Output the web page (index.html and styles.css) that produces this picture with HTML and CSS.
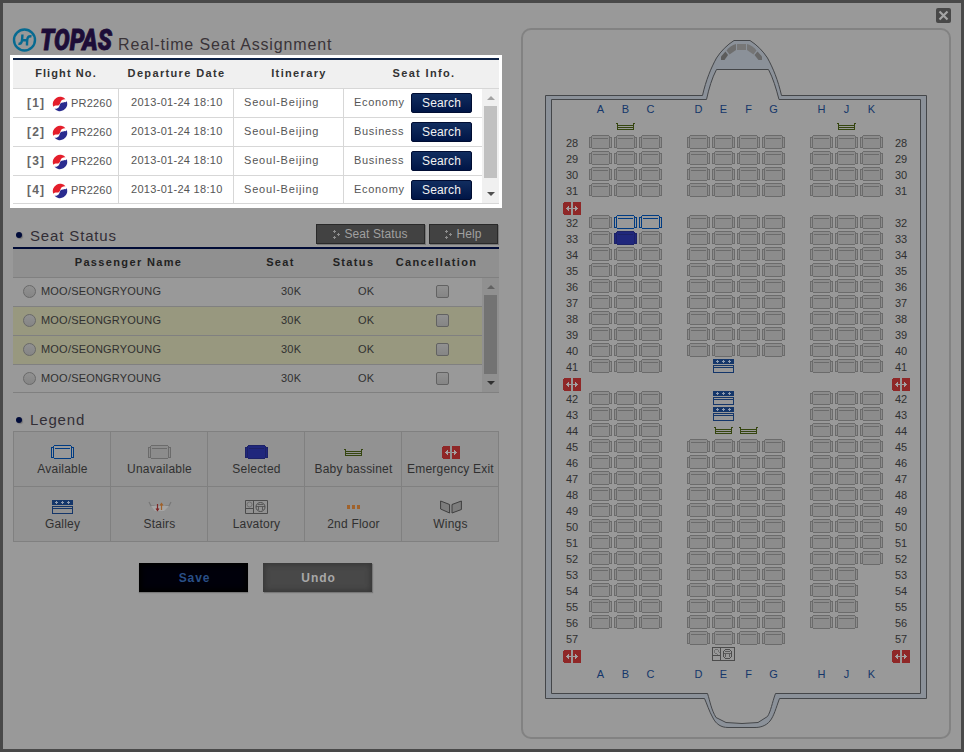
FILE: index.html
```html
<!DOCTYPE html>
<html lang="en">
<head>
<meta charset="utf-8">
<title>Real-time Seat Assignment</title>
<link rel="stylesheet" href="styles.css">
</head>
<body>
<svg class="defs" width="0" height="0" aria-hidden="true">
  <symbol id="seat" viewBox="0 0 23 14">
    <path class="arm" d="M2.5 2.5H.5V12.5H2.5ZM20.5 2.5H22.5V12.5H20.5Z"/>
    <path class="body" d="M3.5 .5H19.5L20.5 1.5V12.5L19.5 13.5H3.5L2.5 12.5V1.5Z"/>
    <path class="seam" d="M4 3.5H19" fill="none"/>
  </symbol>
  <symbol id="bassinet" viewBox="0 0 19 7">
    <path d="M0 .5H2M17 .5H19M1.5 0V7M17.5 0V7M1 2.5H18M1 4.5H18M1 6.5H18" stroke="#35450f" fill="none"/>
  </symbol>
  <symbol id="exit" viewBox="0 0 18 13">
    <path d="M1 0H8V13H1L0 12V1ZM10 0H17L18 1V12L17 13H10Z" fill="#8f2727"/>
    <path d="M3 6H8V7H3ZM4 5H5V8H4ZM5 4H6V9H5ZM10 6H15V7H10ZM13 5H14V8H13ZM12 4H13V9H12Z" fill="#a5a0a0"/>
  </symbol>
  <symbol id="galley" viewBox="0 0 21 14">
    <path d="M0 0H21V5H0Z" fill="#14366a"/>
    <path d="M.5 6.5H20.5V13.5H.5ZM1 8.5H20" fill="none" stroke="#14366a"/>
    <path d="M3 2.500H6M4.500 1V4M9 2.500H12M10.500 1V4M15 2.500H18M16.500 1V4" stroke="#8f9cb0" fill="none"/>
  </symbol>
  <symbol id="lavatory" viewBox="0 0 23 14">
    <path d="M.5 .5H22.500V13.500H.5ZM8.500 1V13M1 8.500H8" fill="none" stroke="#4c4c4c"/>
    <circle cx="4.500" cy="4.500" r="2.500" fill="none" stroke="#666" stroke-width=".8"/>
    <circle cx="15.500" cy="7" r="4.500" fill="none" stroke="#4c4c4c"/>
    <path d="M11 6.500H20M13 4.500H18M13.500 10V6.500M17.500 10V6.500" stroke="#4c4c4c" stroke-width=".8" fill="none"/>
  </symbol>
  <symbol id="airline" viewBox="0 0 16 16">
    <path d="M1.300 10.800A7.300 7.300 0 0 1 13.500 3.200C11 3 9.200 4 8.600 6C8 8.500 7 9.600 5 9.600C3 9.600 2 10 1.300 10.800Z" fill="#e41e2b"/>
    <path d="M14.700 5.200A7.300 7.300 0 0 1 2.500 12.800C5 13 6.800 12 7.400 10C8 7.500 9 6.400 11 6.400C13 6.400 14 6 14.700 5.200Z" fill="#2a2c8f"/>
  </symbol>
</svg>

<div class="window">
  <section class="left">
    <header class="title">
      <svg class="logo" width="102" height="28" viewBox="0 0 102 28">
        <circle cx="11.500" cy="15" r="10.500" fill="none" stroke="#066a91" stroke-width="2.400"/>
        <path d="M5.500 18.500C8.500 19.500 9.200 17 9.400 9.500M14 20.500C14 13 14.500 10.500 18.500 11.500M9 15.200H14.500" fill="none" stroke="#066a91" stroke-width="2.400"/>
        <text class="brand" x="27" y="25" textLength="72" lengthAdjust="spacingAndGlyphs">TOPAS</text>
      </svg>
      <h1>Real-time Seat Assignment</h1>
    </header>

    <div class="flights">
      <div class="thead flight-head"><span>Flight No.</span><span>Departure Date</span><span>Itinerary</span><span>Seat Info.</span></div>
      <div class="tbody">
        <div class="rows">
          <div class="flight"><div class="no"><b>[1]</b><svg width="16" height="16"><use href="#airline"/></svg><span>PR2260</span></div><div class="date">2013-01-24 18:10</div><div class="route">Seoul-Beijing</div><div class="info"><span>Economy</span><button>Search</button></div></div>
          <div class="flight"><div class="no"><b>[2]</b><svg width="16" height="16"><use href="#airline"/></svg><span>PR2260</span></div><div class="date">2013-01-24 18:10</div><div class="route">Seoul-Beijing</div><div class="info"><span>Business</span><button>Search</button></div></div>
          <div class="flight"><div class="no"><b>[3]</b><svg width="16" height="16"><use href="#airline"/></svg><span>PR2260</span></div><div class="date">2013-01-24 18:10</div><div class="route">Seoul-Beijing</div><div class="info"><span>Business</span><button>Search</button></div></div>
          <div class="flight"><div class="no"><b>[4]</b><svg width="16" height="16"><use href="#airline"/></svg><span>PR2260</span></div><div class="date">2013-01-24 18:10</div><div class="route">Seoul-Beijing</div><div class="info"><span>Economy</span><button>Search</button></div></div>
        </div>
        <div class="scroll"><i class="up"></i><i class="thumb"></i><i class="down"></i></div>
      </div>
    </div>

    <div class="heading status-heading">
      <h2>Seat Status</h2>
      <a class="tool wide"><svg width="7" height="9" viewBox="0 0 7 9"><path d="M0 1.500H3M1.500 0V3M4 4.500H7M5.500 3V6M0 7.500H3M1.500 6V9"/></svg>Seat Status</a>
      <a class="tool"><svg width="7" height="9" viewBox="0 0 7 9"><path d="M0 1.500H3M1.500 0V3M4 4.500H7M5.500 3V6M0 7.500H3M1.500 6V9"/></svg>Help</a>
    </div>
    <div class="passengers">
      <div class="thead passenger-head"><span>Passenger Name</span><span>Seat</span><span>Status</span><span>Cancellation</span></div>
      <div class="tbody">
        <div class="rows">
          <div class="passenger"><i class="radio"></i><span>MOO/SEONGRYOUNG</span><span>30K</span><span>OK</span><i class="check"></i></div>
          <div class="passenger marked"><i class="radio"></i><span>MOO/SEONGRYOUNG</span><span>30K</span><span>OK</span><i class="check"></i></div>
          <div class="passenger marked"><i class="radio"></i><span>MOO/SEONGRYOUNG</span><span>30K</span><span>OK</span><i class="check"></i></div>
          <div class="passenger"><i class="radio"></i><span>MOO/SEONGRYOUNG</span><span>30K</span><span>OK</span><i class="check"></i></div>
        </div>
        <div class="scroll"><i class="up"></i><i class="thumb"></i><i class="down"></i></div>
      </div>
    </div>

    <div class="heading legend-heading"><h2>Legend</h2></div>
    <div class="legend">
      <div><svg class="icon available" width="23" height="14"><use href="#seat"/></svg><span>Available</span></div>
      <div><svg class="icon" width="23" height="14"><use href="#seat"/></svg><span>Unavailable</span></div>
      <div><svg class="icon selected" width="23" height="14"><use href="#seat"/></svg><span>Selected</span></div>
      <div><svg class="icon" width="19" height="7"><use href="#bassinet"/></svg><span>Baby bassinet</span></div>
      <div><svg class="icon" width="18" height="13"><use href="#exit"/></svg><span>Emergency Exit</span></div>
      <div><svg class="icon" width="21" height="14"><use href="#galley"/></svg><span>Galley</span></div>
      <div><svg width="24" height="12" viewBox="0 0 24 12"><path d="M1 1L3 5H6L8 10M23 1L21 5H18L15 10" fill="none" stroke="#777" stroke-width="1.200"/><path d="M3 5H21L16 10H7Z" fill="#a5a5a5"/><path d="M9.500 3V9M8 7.500L9.500 9.500L11 7.500" stroke="#7d2626" stroke-width="1.200" fill="none"/><path d="M13.500 9V3M12 4.500L13.500 2.500L15 4.500" stroke="#a0622b" stroke-width="1.200" fill="none"/></svg><span>Stairs</span></div>
      <div><svg width="23" height="14"><use href="#lavatory"/></svg><span>Lavatory</span></div>
      <div><svg class="icon" width="13" height="4" viewBox="0 0 13 4"><path d="M0 0H3V4H0ZM5 0H8V4H5ZM10 0H13V4H10Z" fill="#a0622b"/></svg><span>2nd Floor</span></div>
      <div><svg width="22" height="14" viewBox="0 0 22 14"><path d="M.6 1L9.600 4.500V13L.6 9ZM21.400 1L12 4.500V13L21.400 9.500Z" fill="#7d7d7d" stroke="#3e3e3e"/></svg><span>Wings</span></div>
    </div>

    <div class="actions"><button class="save">Save</button><button class="undo">Undo</button></div>
  </section>

  <section class="right">
    <button class="close" aria-label="Close"><svg width="15" height="15" viewBox="0 0 15 15"><path d="M3.500 3.500L11.500 11.500M11.500 3.500L3.500 11.500" stroke="#a5a5a5" stroke-width="2.200"/></svg></button>
    <div class="cabin">
      <svg class="hull" width="426" height="707" viewBox="523 30 426 707">
        <path fill-rule="evenodd" fill="#8b9199" stroke="#444649" d="M545.500 95.500H702.500C706 80 711 68 716.500 58C721 51 727 45 734 40.500H750C757 45 763 51 767.500 58C773 68 778 80 781.500 95.500H926.500V698.500H779.500C776 708 774 716 770 721C766 726 760 727.500 755 727.500H728C721 727.500 716 724 713 718C709 711 707 704 704.500 698.500H545.500Z
        M551.500 99.500H706.500C709 88 712 78 716.500 69.500H768.500C773 78 776 88 779 99.500H920.500V693.500H775.500C772 703 771 711 767.500 716.500L758 722.500Q742 724.500 726 722.500L716 717.500C711 709 710 701 707.500 693.500H551.500Z"/>
        <path d="M721 56.500L725.500 51.500L728 55L724.500 60H721Z" fill="#5c5c5c"/>
        <path d="M726.500 50.500C729 47.500 732 45 736 44V50L729.500 54.500Z" fill="#6e6e6e"/>
        <path d="M737 44H746V50H737Z" fill="#777"/>
        <path d="M747 44C751 45 754 47.500 756.500 50.500L753.500 54.500L747 50Z" fill="#757575"/>
        <path d="M757.500 51.500L762 56.500V60H758.500L754.500 55Z" fill="#686868"/>
      </svg>
      <div class="seatmap" id="seatmap"></div>
    </div>
  </section>
</div>
<script src="seatmap.js"></script>
</body>
</html>
```
FILE: styles.css
```css
* { box-sizing: border-box; }
body {
  margin: 0;
  font-family: "Liberation Sans", Arial, sans-serif;
  font-size: 11px;
  color: #303030;
}
h1, h2 { margin: 0; font-weight: normal; }
button { font-family: inherit; padding: 0; }
svg { display: block; flex: none; }
i { display: block; }
.defs { position: absolute; }

.window {
  width: 964px;
  height: 752px;
  border: 3px solid #494949;
  background: #999;
  display: flex;
}
.left { width: 518px; padding: 22px 0 0 7px; }

.title { height: 30px; display: flex; padding-left: 3px; }
.logo { overflow: visible; }
.brand {
  font-family: Roboto, sans-serif;
  font-size: 29px;
  font-weight: 900;
  font-style: italic;
  fill: #1d0d38;
  stroke: #1d0d38;
  stroke-width: .8px;
}
h1 {
  margin: 10px 0 0 3px;
  font-size: 16px;
  line-height: 19px;
  letter-spacing: .85px;
  color: #3a3438;
  white-space: nowrap;
}

.flights {
  width: 492px;
  height: 153px;
  padding: 3px;
  background: #fff;
  color: #555;
}
.thead {
  display: grid;
  height: 31px;
  border-top: 2px solid #0c2144;
  border-bottom: 1px solid #d7d7d7;
  background: #f0f0f0;
  color: #333;
  font-weight: bold;
  letter-spacing: 1.35px;
  line-height: 27px;
  text-align: center;
  white-space: nowrap;
}
.flight-head { grid-template-columns: 106px 115px 130px 120px; }
.flight-head span:first-child { letter-spacing: 1.1px; }
.tbody { display: flex; }
.rows { width: 469px; }
.flight {
  display: grid;
  grid-template-columns: 106px 115px 110px 138px;
  height: 29px;
  border-bottom: 1px solid #d7d7d7;
  line-height: 27px;
  white-space: nowrap;
}
.flight:last-child, .passenger:last-child { height: 28px; }
.flight > div { border-right: 1px solid #d7d7d7; }
.no { display: flex; align-items: center; height: 28px; padding-left: 14px; letter-spacing: .2px; }
.no b { width: 24px; font-size: 12px; color: #666; letter-spacing: 1.2px; }
.no svg { margin: 1px 3px 0 1px; }
.no > span { margin-top: 1px; }
.date { height: 28px; padding-left: 12px; letter-spacing: .3px; }
.route { height: 28px; padding-left: 10px; letter-spacing: .8px; }
.flight .info { display: flex; align-items: flex-start; height: 27px; padding-left: 10px; border-right: 0; letter-spacing: .7px; }
.info span { width: 57px; }
.info button {
  width: 61px;
  height: 20px;
  margin-top: 4px;
  border: 1px solid #000d33;
  border-radius: 2px;
  background: linear-gradient(#112d5f, #001546);
  color: #f2f2f2;
  font-size: 12px;
  line-height: 18px;
  letter-spacing: .15px;
}
.scroll {
  width: 17px;
  height: 115px;
  padding: 7px 2px 7px;
  background: #f0f0f0;
  border-bottom: 1px solid #d7d7d7;
  display: flex;
  flex-direction: column;
  align-items: center;
}
.up { border: 4px solid transparent; border-top: 0; border-bottom-color: #a3a3a3; }
.thumb { width: 13px; height: 72px; margin: 6px 0 14px; background: #c1c1c1; }
.down { border: 4px solid transparent; border-bottom: 0; border-top-color: #505050; }

.heading { display: flex; align-items: center; padding-left: 6px; }
.heading::before {
  content: "";
  width: 6px;
  height: 6px;
  margin-right: 8px;
  border-radius: 50%;
  background: #000b3a;
  box-shadow: 1px 1px 1px #777;
}
h2 { font-size: 15px; line-height: 20px; letter-spacing: .85px; color: #322e36; }
.status-heading { width: 488px; height: 22px; margin-top: 16px; padding-bottom: 2px; }
.status-heading::before { margin-top: 2px; }
.status-heading h2 { margin: 3px auto 0 0; }
.tool {
  width: 69px;
  height: 20px;
  display: flex;
  align-items: center;
  justify-content: center;
  gap: 4px;
  margin-left: 4px;
  border: 1px solid #292929;
  background: #424242;
  box-shadow: 1px 1px 0 #777;
  color: #a0a0a0;
  font-size: 12px;
  letter-spacing: .1px;
}
.tool.wide { width: 109px; }
.tool path { fill: none; stroke: #a0a0a0; shape-rendering: crispEdges; stroke-opacity: .8; }

.passengers { width: 486px; margin: 1px 0 0 3px; }
.passengers .thead { border-top-color: #000b36; border-bottom-color: #808080; background: #909090; color: #222; }
.passenger-head { grid-template-columns: 231px 73px 73px 93px; }
.passenger {
  display: grid;
  grid-template-columns: 28px 237px 76px 82px 1fr;
  align-items: start;
  height: 29px;
  border-bottom: 1px solid #808080;
  letter-spacing: .2px;
  line-height: 26px;
}
.passenger.marked { background: #98987f; }
.passenger span:nth-of-type(2) { padding-left: 3px; }
.passenger span:nth-of-type(3) { padding-left: 4px; }
.radio, .check {
  width: 13px;
  height: 13px;
  margin-top: 7px;
  border: 1px solid #696969;
  background: linear-gradient(#919191, #858585);
}
.radio { margin-left: 10px; border-radius: 50%; }
.check { border-radius: 2px; border-color: #626262; }
.passengers .scroll { background: #909090; border-color: #808080; }
.passengers .thumb { height: 79px; background: #737373; margin-bottom: 7px; }
.passengers .up { border-bottom-color: #626262; }
.passengers .down { border-top-color: #303030; }

.legend-heading { height: 20px; margin-top: 17px; }
.legend {
  width: 486px;
  margin: 1px 0 0 3px;
  display: grid;
  grid-template-columns: repeat(5, 97px);
  grid-auto-rows: 55px;
  border: solid #808080;
  border-width: 1px 0 0 1px;
  background: #929292;
}
.legend div {
  display: grid;
  grid-template-rows: 16px 15px;
  row-gap: 1px;
  place-items: center;
  align-content: start;
  padding: 12px 0 0 1px;
  border: solid #808080;
  border-width: 0 1px 1px 0;
  font-size: 12px;
  letter-spacing: .2px;
  white-space: nowrap;
}
.icon { shape-rendering: crispEdges; }
#seat path { stroke: var(--line, #6b6b6b); fill: var(--body, #8c8c8c); }
.available use { --line: #003b82; --body: #999; }
.selected use { --line: #1d2266; --body: #20277c; }

.actions { display: flex; gap: 15px; margin: 21px 0 0 129px; }
.actions button {
  width: 109px;
  height: 29px;
  padding-left: 2px;
  border: 0;
  font-size: 12px;
  font-weight: bold;
  line-height: 31px;
  letter-spacing: .9px;
}
.save { background: #00000a; box-shadow: inset 0 0 4px 3px #000, 0 1px 1px #777; color: #294f86; }
.undo { background: #484848; box-shadow: inset 0 0 5px 2px #383838, 1px 1px 1px #777; color: #a8a8a8; }

.right { display: flex; flex-direction: column; width: 430px; }
.close {
  width: 15px;
  height: 15px;
  margin: 5px 0 5px auto;
  border: 0;
  border-radius: 2px;
  background: #484848;
}
.cabin {
  position: relative;
  width: 430px;
  height: 711px;
  border: 2px solid #828282;
  border-radius: 10px;
}
.hull { position: absolute; inset: 0; }
.seatmap { position: relative; margin: 71px 0 0 40px; }
.row {
  display: grid;
  grid-template-columns: 18px 8px repeat(3, 25px) 23px repeat(4, 25px) 23px repeat(3, 25px) 7px 18px;
  height: 16px;
}
.letters { line-height: 16px; color: #14366a; }
.letters.top { height: 18px; }
.letters.bottom { margin-top: 3px; }
.letters span { width: 23px; text-align: center; }
.number { line-height: 17px; text-align: center; }
.row .bassinet { margin: 4px 0 0 2px; }
.row .exit { margin-top: 3px; }
.row .galley { margin-left: 1px; }
```
FILE: seatmap.js
```js
const COLUMN = { A: 3, B: 4, C: 5, D: 7, E: 8, F: 9, G: 10, H: 12, J: 13, K: 14 };
const LEFT = 1, RIGHT = 16;
const SIZE = { seat: [23, 14], bassinet: [19, 7], exit: [18, 13], galley: [21, 14], lavatory: [23, 14] };
const map = document.getElementById("seatmap");

function addRow(content, name = "") {
  map.insertAdjacentHTML("beforeend", `<div class="row ${name}">${content}</div>`);
}
function icon(type, col, state = "") {
  const [w, h] = SIZE[type];
  return `<svg class="icon ${type} ${state}" width="${w}" height="${h}" style="grid-area:1/${col}"><use href="#${type}"/></svg>`;
}
function text(value, col, name = "") {
  return `<span class="${name}" style="grid-area:1/${col}">${value}</span>`;
}
const letters = Object.entries(COLUMN).map(([l, c]) => text(l, c)).join("");

const EXTRAS = { 41: { E: "galley" }, 42: { E: "galley" }, 43: { E: "galley" }, 44: { E: "bassinet", F: "bassinet" } };
const STATES = { "32B": "available", "32C": "available", "33B": "selected" };

function hasSeat(row, letter) {
  if ("ABC".includes(letter)) return row <= 56;
  if ("DEFG".includes(letter)) return row <= 40 || row >= 45;
  return row <= (letter === "K" ? 52 : 56);
}

addRow(letters, "letters top");
addRow(icon("bassinet", COLUMN.B) + icon("bassinet", COLUMN.J));
for (let row = 28; row <= 57; row++) {
  let cells = text(row, LEFT, "number") + text(row, RIGHT, "number");
  for (const [letter, col] of Object.entries(COLUMN)) {
    const extra = EXTRAS[row] && EXTRAS[row][letter];
    if (extra) cells += icon(extra, col);
    else if (hasSeat(row, letter)) cells += icon("seat", col, STATES[row + letter]);
  }
  addRow(cells);
  if (row === 31) addRow(icon("exit", LEFT));
  if (row === 41) addRow(icon("exit", LEFT) + icon("exit", RIGHT));
}
addRow(icon("exit", LEFT) + icon("lavatory", COLUMN.E) + icon("exit", RIGHT));
addRow(letters, "letters bottom");
```
